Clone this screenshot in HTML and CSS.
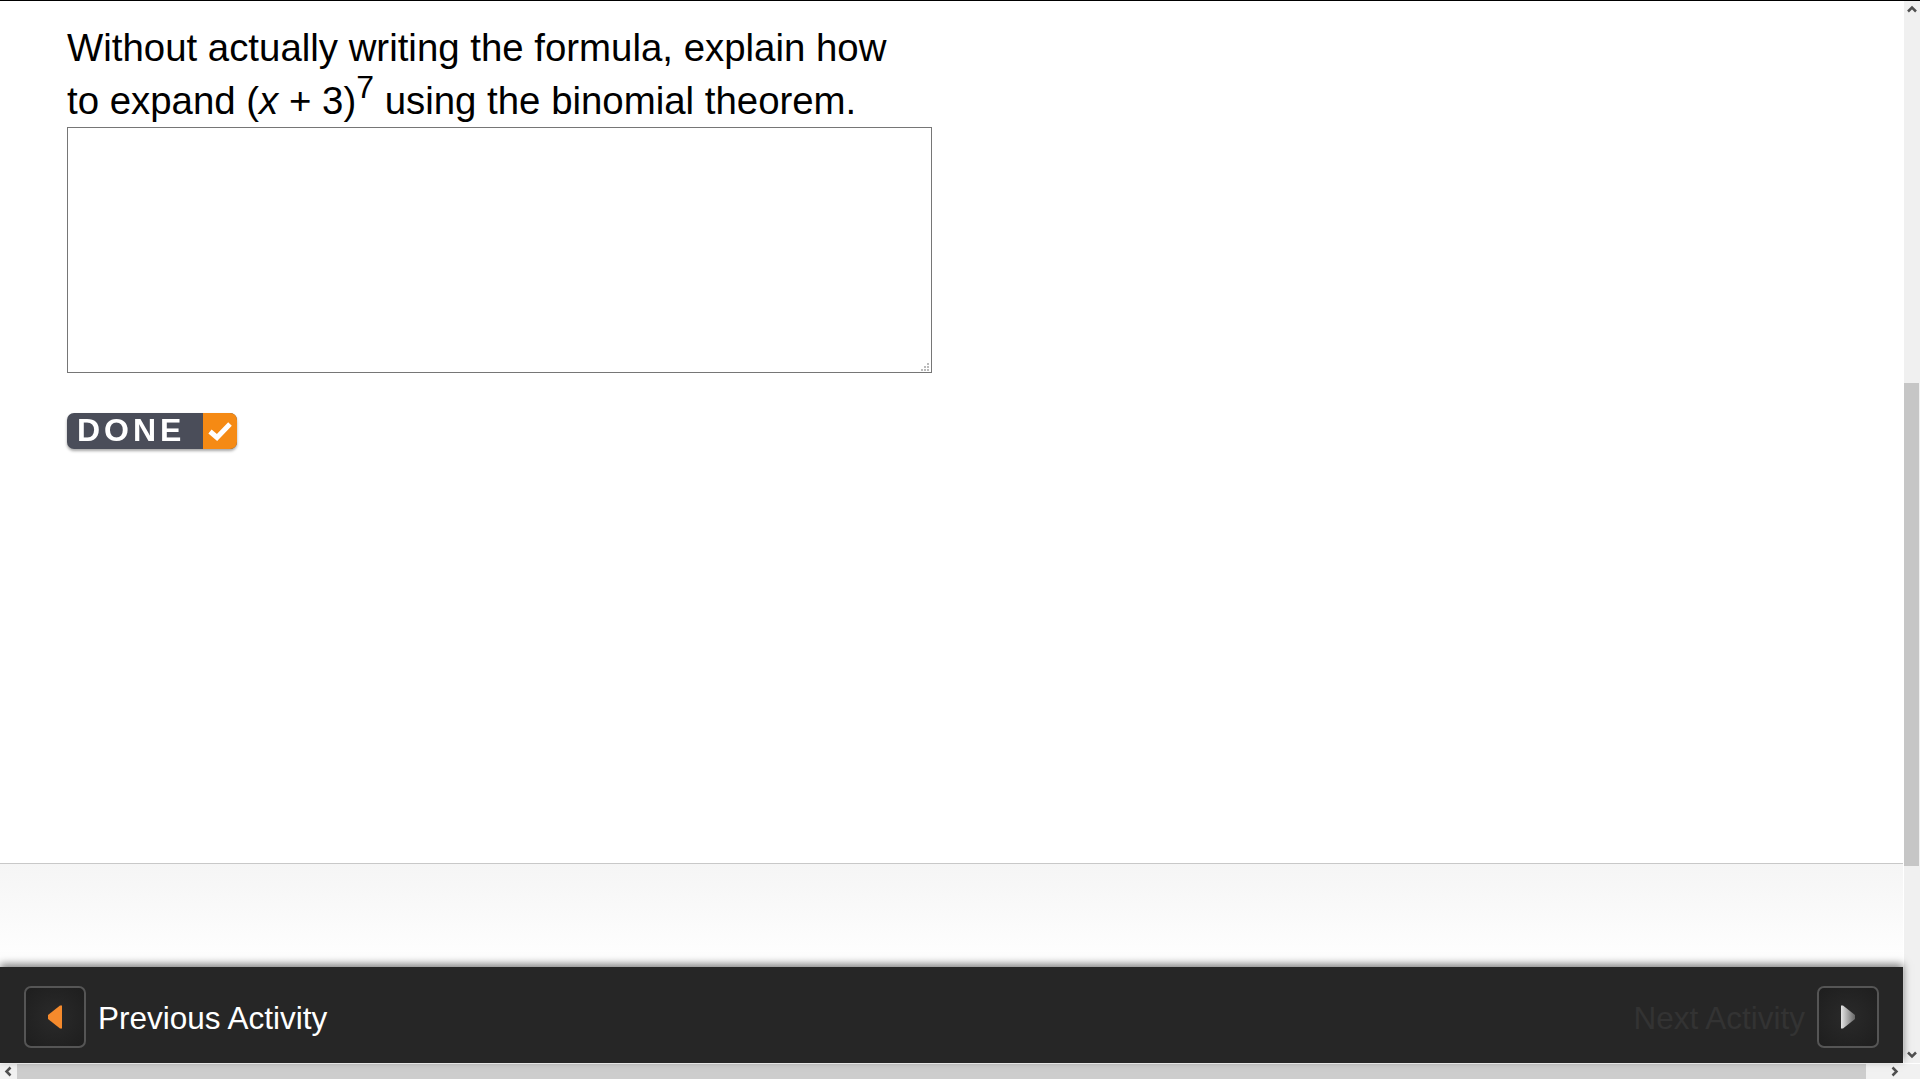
FILE: index.html
```html
<!DOCTYPE html>
<html lang="en">
<head>
    <meta charset="UTF-8">
    <title>Activity</title>
    <link rel="stylesheet" href="styles.css">
</head>
<body>
    <div class="window">
        <div class="view">
            <div class="page">
                <main class="content">
                    <p class="question">Without actually writing the formula, explain how<br>to expand (<i>x</i> + 3)<sup>7</sup> using the binomial theorem.</p>
                    <div class="answer-wrap">
                        <textarea class="answer"></textarea>
                        <svg class="grip" width="8" height="8" viewBox="0 0 8 8" fill="#bbb">
                            <rect x="6" y="0" width="2" height="2"/>
                            <rect x="3" y="3" width="2" height="2"/>
                            <rect x="6" y="3" width="2" height="2"/>
                            <rect x="0" y="6" width="2" height="2"/>
                            <rect x="3" y="6" width="2" height="2"/>
                            <rect x="6" y="6" width="2" height="2"/>
                        </svg>
                    </div>
                    <button class="done" type="button">
                        <span class="done-label">DONE</span>
                        <span class="done-check">
                            <svg width="26" height="22" viewBox="0 0 26 22"><path d="M3 11.500l7 6L23 4" fill="none" stroke="#fff" stroke-width="5"/></svg>
                        </span>
                    </button>
                </main>
                <div class="footer-space"></div>
                <nav class="activity-nav">
                    <div class="nav-side">
                        <a class="nav-btn">
                            <svg width="18" height="24" viewBox="0 0 18 24"><path d="M16 .5V23.500H14L2 14V10L14 .5Z" fill="#f58a2c"/></svg>
                        </a>
                        <span class="nav-label">Previous Activity</span>
                    </div>
                    <div class="nav-side">
                        <span class="nav-label nav-label-off">Next Activity</span>
                        <a class="nav-btn">
                            <svg width="18" height="24" viewBox="0 0 18 24"><defs><linearGradient id="nextArrow"><stop offset="0" stop-color="#e4e4e4"/><stop offset="1" stop-color="#666"/></linearGradient></defs><path d="M2 .5V23.500H4L16 14V10L4 .5Z" fill="url(#nextArrow)"/></svg>
                        </a>
                    </div>
                </nav>
            </div>
            <div class="vbar">
                <svg class="arrow" width="16" height="16" viewBox="0 0 16 16"><path d="M4 10.500l4-4 4 4" fill="none" stroke="#505050" stroke-width="2.500"/></svg>
                <div class="vbar-track"><div class="vbar-thumb"></div></div>
                <svg class="arrow" width="16" height="16" viewBox="0 0 16 16"><path d="M4 5.500l4 4 4-4" fill="none" stroke="#505050" stroke-width="2.500"/></svg>
            </div>
        </div>
        <div class="hbar">
            <svg class="arrow" width="17" height="15" viewBox="0 0 17 15"><path d="M10.500 3.500l-4 4 4 4" fill="none" stroke="#505050" stroke-width="2.500"/></svg>
            <div class="hbar-thumb"></div>
            <svg class="arrow" width="17" height="15" viewBox="0 0 17 15"><path d="M6.500 3.500l4 4-4 4" fill="none" stroke="#505050" stroke-width="2.500"/></svg>
        </div>
    </div>
</body>
</html>
```

FILE: styles.css
```css
html, body {
    margin: 0;
    height: 100%;
    overflow: hidden;
}

body {
    font-family: "Liberation Sans", Arial, sans-serif;
    background: #fff;
    color: #000;
}

.window {
    height: 1080px;
    display: flex;
    flex-direction: column;
    border-top: 1px solid #000;
    box-sizing: border-box;
}

.view {
    flex: 1;
    display: flex;
    min-height: 0;
}

.page {
    flex: 1;
    display: flex;
    flex-direction: column;
    min-width: 0;
}

/* question area */
.content {
    flex: 1;
    padding: 0 67px;
    min-height: 0;
}

.question {
    margin: 0;
    padding-top: 21px;
    font-size: 38.4px;
    line-height: 52.5px;
}

.question sup {
    font-size: 32px;
    line-height: 0;
    vertical-align: 16px;
}

.answer-wrap {
    position: relative;
    width: 865px;
}

.answer {
    display: block;
    width: 865px;
    height: 246px;
    box-sizing: border-box;
    margin: 0;
    border: 1px solid #767676;
    background: #fff;
    resize: none;
    outline: none;
}

.grip {
    position: absolute;
    right: 3px;
    bottom: 2px;
}

.done {
    display: flex;
    width: 170px;
    height: 36px;
    margin: 40px 0 0;
    padding: 0;
    border: 0;
    border-radius: 7px;
    overflow: hidden;
    background: #4a4d59;
    box-shadow: 0 2px 3px rgba(0, 0, 0, 0.35);
    filter: blur(0.4px);
}

.done-label {
    flex: 1;
    padding-left: 10px;
    text-align: left;
    color: #fff;
    font-family: "Liberation Sans", sans-serif;
    font-weight: bold;
    font-size: 32px;
    line-height: 35px;
    letter-spacing: 4px;
}

.done-check {
    width: 34px;
    display: flex;
    align-items: center;
    justify-content: center;
    background: #f58a14;
}

/* bottom */
.footer-space {
    height: 103px;
    margin-right: 1px;
    border-top: 1px solid #c8c8c8;
    background: linear-gradient(#f5f5f5, #fff);
}

.activity-nav {
    height: 96px;
    margin-right: 1px;
    box-sizing: border-box;
    display: flex;
    justify-content: space-between;
    align-items: center;
    padding: 4px 24px 0 24px;
    background: #262626;
    box-shadow: 0 -3px 8px rgba(0, 0, 0, 0.5);
    position: relative;
}

.nav-side {
    display: flex;
    align-items: center;
    gap: 12px;
}

.nav-btn {
    width: 62px;
    height: 62px;
    box-sizing: border-box;
    display: flex;
    align-items: center;
    justify-content: center;
    border: 2px solid #555;
    border-radius: 7px;
    background: radial-gradient(#2a2a2a, #1e1e1e);
}

.nav-label {
    padding-top: 2px;
    font-size: 31.500px;
    color: #fff;
}

.nav-label-off {
    color: #333;
}

/* fake scrollbars */
.vbar {
    width: 16px;
    display: flex;
    flex-direction: column;
    background: #f0f0f0;
}

.vbar-track {
    flex: 1;
    padding: 366px 1px 181px 0;
    min-height: 0;
}

.vbar-thumb {
    height: 100%;
    background: #c6c6c6;
}

.hbar {
    height: 17px;
    box-sizing: border-box;
    display: flex;
    background: #f1f1f1;
    border-top: 1px solid #fff;
    border-bottom: 1px solid #fff;
}

.hbar-thumb {
    width: 1849px;
    margin-right: 20px;
    background: #cdcdcd;
}

.arrow {
    flex: none;
    display: block;
}
```
